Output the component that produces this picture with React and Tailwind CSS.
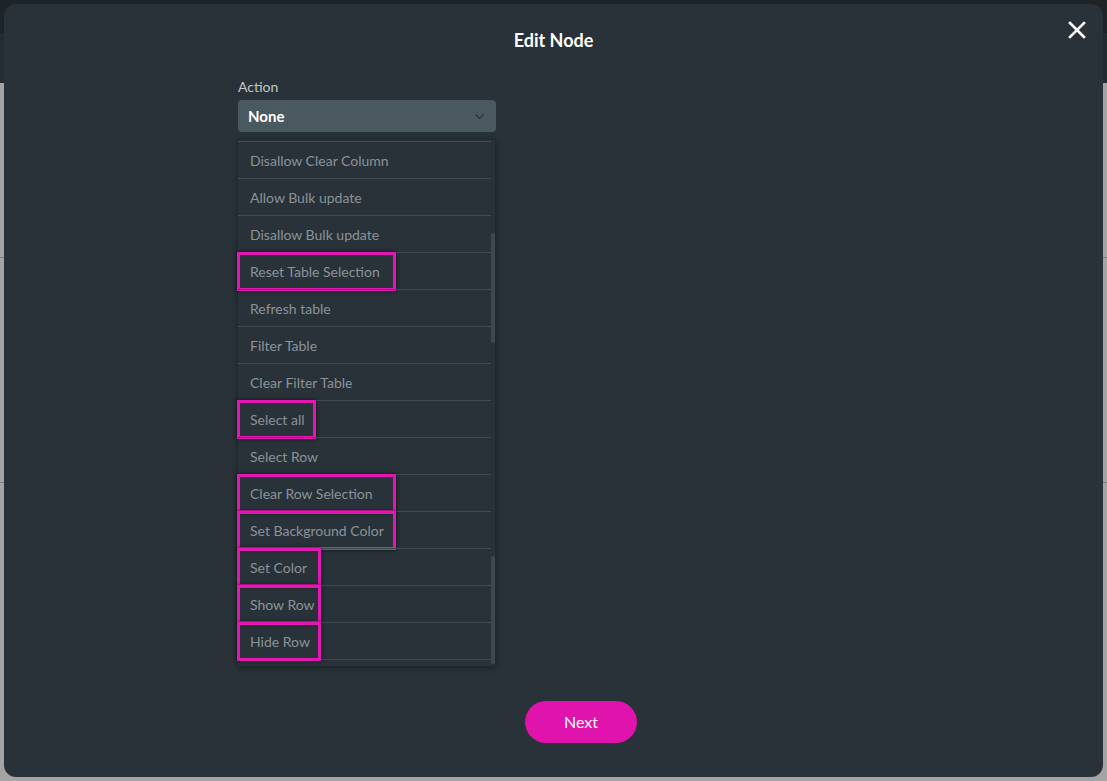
import React from 'react';
import { ChevronDown } from 'lucide-react';

const items = [
    { label: 'Disallow Clear Column' },
    { label: 'Allow Bulk update' },
    { label: 'Disallow Bulk update' },
    { label: 'Reset Table Selection', mark: 'w-[159px]' },
    { label: 'Refresh table' },
    { label: 'Filter Table' },
    { label: 'Clear Filter Table' },
    { label: 'Select all', mark: 'w-[79px]' },
    { label: 'Select Row' },
    { label: 'Clear Row Selection', mark: 'w-[159px]' },
    { label: 'Set Background Color', mark: 'w-[159px]' },
    { label: 'Set Color', mark: 'w-[84px]' },
    { label: 'Show Row', mark: 'w-[84px]' },
    { label: 'Hide Row', mark: 'w-[84px]' },
];

const ActionItem = ({ label, mark }) => (
    <div className="relative h-[37px] border-t border-[#404b51] mr-1 flex items-center pl-3">
        <span className="text-[14px] text-[#8b9398]">{label}</span>
        {mark && (
            <div className={`absolute left-[-1px] top-[-1px] h-[39px] ${mark} border-[3px] border-[#e317b1] shadow-[0_0_4px_rgba(0,0,0,0.6)]`} />
        )}
    </div>
);

export default function App() {
    return (
        <div className="relative w-full h-[781px] overflow-hidden font-['Lato','Noto_Sans',sans-serif]">
            {/* page behind the overlay */}
            <div className="h-[33px] bg-[#1d2327]" />
            <div className="h-[50px] bg-[#242c31]" />
            <div className="h-[175px] bg-[#a4a4a4] border-b border-[#7d7d7d]" />
            <div className="h-[225px] bg-[#a4a4a4] border-b border-[#7d7d7d]" />
            <div className="h-[298px] bg-[#a4a4a4]" />

            {/* modal */}
            <div className="absolute left-[4px] top-[4px] w-[1099px] h-[773px] bg-[#283238] rounded-[12px] flex flex-col items-start">
                <div className="relative w-full h-[64px] flex items-center justify-center pt-[8px]">
                    <h2 className="text-[18px] font-bold text-white">Edit Node</h2>
                    <button className="absolute right-[16px] top-[16px] w-[20px] h-[20px] flex items-center justify-center">
                        <svg width="18" height="18" viewBox="0 0 18 18">
                            <path d="M2 2 L16 16 M16 2 L2 16" stroke="#fff" strokeWidth="2.6" strokeLinecap="square" />
                        </svg>
                    </button>
                </div>

                <div className="ml-[234px] w-[258px] flex flex-col">
                    <label className="text-[14px] text-[#c3c8cb] mt-[8px] mb-[3px]">Action</label>
                    <div className="h-[32px] bg-[#4a585f] rounded-[4px] flex items-center justify-between pl-[10px] pr-[9px]">
                        <span className="text-[15px] font-bold text-white">None</span>
                        <ChevronDown size={15} strokeWidth={2.2} className="text-[#28343a]" />
                    </div>

                    <div className="relative mt-[6px] h-[528px] border-t-2 border-[#222b30] border-r border-r-[#222a2f] bg-[#283238] shadow-[0_2px_6px_rgba(0,0,0,0.35)] pt-[1px]">
                        {items.map((it) => (
                            <ActionItem key={it.label} {...it} />
                        ))}
                        <div className="border-t border-[#404b51] mr-1" />
                        <div className="absolute right-[0px] top-[93px] w-[4px] h-[110px] rounded-sm bg-[#3d4950]" />
                        <div className="absolute right-[0px] top-[416px] w-[4px] h-[108px] rounded-sm bg-[#3d4950]" />
                    </div>
                </div>

                <div className="flex-1" />
                <button className="mb-[34px] ml-[521px] w-[112px] h-[42px] rounded-full bg-[#e113ad] text-white text-[16px]">
                    Next
                </button>
            </div>
        </div>
    );
}
